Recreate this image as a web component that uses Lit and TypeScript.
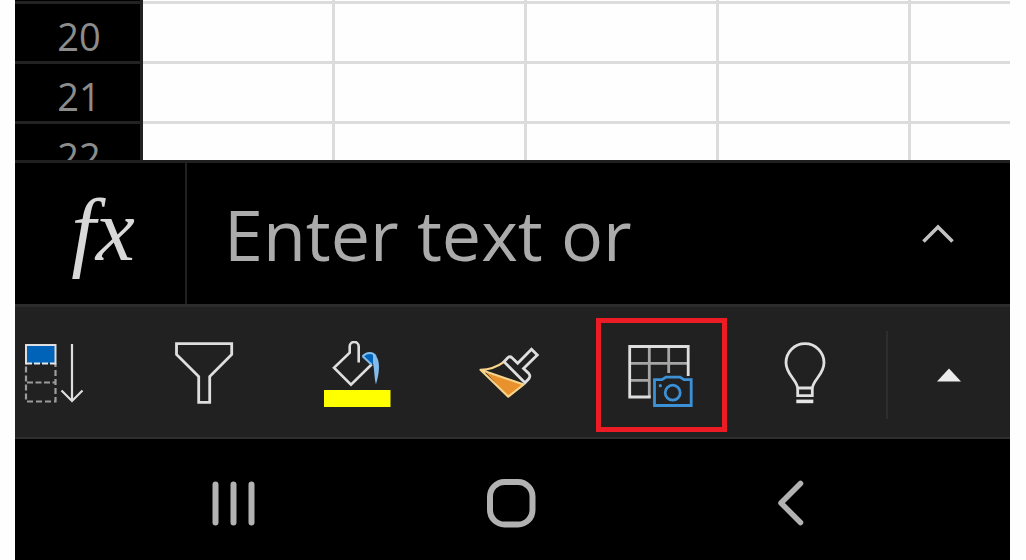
import { LitElement, html, css, svg } from "lit";
import { customElement, property } from "lit/decorators.js";

const icons = {
  fillDown: svg`
    <path d="M6 22.5V60.5H35.5V22.5" stroke="#9c9c9c" stroke-width="2.2" stroke-dasharray="6 3" stroke-dashoffset="-3"/>
    <path d="M7 41.5H35" stroke="#9c9c9c" stroke-width="2.2" stroke-dasharray="6 2.5"/>
    <path d="M6 4H35.5V22.5H6Z" fill="#0063b8"/>
    <path d="M6 23.5V4H35.5V23.5" stroke="#dedede" stroke-width="2"/>
    <path d="M6 22.5H35.5" stroke="#e6e6e6" stroke-width="2" stroke-dasharray="6 2"/>
    <path d="M52 3V59.5M41.5 49.5 52 60 62.5 49.5" stroke="#dedede" stroke-width="2.2"/>`,
  filter: svg`
    <path d="M4.5 2.7H59.7V13.5L37.7 35.5V61.4H26.7V35.5L4.5 13.5Z" stroke="#dedede" stroke-width="2.8"/>`,
  fillColor: svg`
    <path d="M39 16C42 11.5 48 10.5 51.5 14.5L49.5 22.5 46.5 23.5Z" fill="#0063b8"/>
    <path d="M38.5 15.5C42.5 11 49 10.7 51.8 15.5" stroke="#83bceb" stroke-width="2"/>
    <path d="M49 12C57 17 56 31 51.9 43.5 50.2 37 50.5 29 49 22Z" fill="#83bceb"/>
    <path d="M34.7 21.5V5.5a4.5 4.5 0 0 0-9 0V11.7L10 26.7 27 43.7 47.8 23.3" stroke="#dedede" stroke-width="2.6"/>
    <path d="M38.6 15.2 47.5 23.5" stroke="#83bceb" stroke-width="2"/>
    <path d="M0 49H66.5V66H0Z" fill="#ffff00"/>`,
  formatPainter: svg`
    <path d="M11 31.5 48.5 43.7 33.3 56Z" fill="#e8912d"/>
    <path d="M29 20.8C22 26 14 28.5 5.5 28.8L33.3 55.7 48.7 43.5 5.5 28.8" stroke="#f8d58c" stroke-width="2.2" stroke-linejoin="round"/>
    <path d="M29 20.8 33 16.5Q35 14.8 37 16.7L42.7 22.3 56.5 8.3 62.3 14 48.5 27.5 53.8 32.5Q55.8 35 54 37.5L50 41.7Z" stroke="#dedede" stroke-width="2.8"/>`,
  picture: svg`
    <path d="M22.3 5V56M41.7 5V32M3 22.3H61M3 39.3H23" stroke="#a6a6a6" stroke-width="2.8"/>
    <path d="M23.7 56H2.7V5.5H61.2V35" stroke="#dedede" stroke-width="2.8"/>
    <path d="M27.5 38.6H35L39 36.1H53L57 38.6H64.2V64.5H27.5Z" stroke="#3c91d6" stroke-width="2.8"/>
    <circle cx="45.7" cy="51.7" r="7.5" stroke="#3c91d6" stroke-width="2.8"/>
    <circle cx="33.3" cy="44.7" r="1.6" fill="#3c91d6"/>`,
  bulb: svg`
    <path d="M26.7 54.7V48C26.7 39 15 34 15 21.7a19 19 0 0 1 38 0C53 34 41.3 39 41.3 48V54.7ZM26.7 47H41.3" stroke="#e0e0e0" stroke-width="2.8"/>
    <path d="M25.3 60.4H42.3" stroke="#e6e6e6" stroke-width="3.6"/>`,
};

const tools = [
  { label: "Fill down", icon: icons.fillDown },
  { label: "Sort and filter", icon: icons.filter },
  { label: "Fill colour", icon: icons.fillColor },
  { label: "Format painter", icon: icons.formatPainter },
  { label: "Data from picture", icon: icons.picture, marked: true },
  { label: "Tell me", icon: icons.bulb },
];

const reset = css`
  :host, * { box-sizing: border-box; }
  button {
    display: flex;
    align-items: center;
    justify-content: center;
    margin: 0;
    padding: 0;
    border: 0;
    background: none;
    color: inherit;
    font: inherit;
  }
  svg { display: block; flex: none; fill: none; }
`;

@customElement("sheet-grid")
class SheetGrid extends LitElement {
  @property({ type: Array }) rows: number[] = [20, 21, 22];

  static styles = [reset, css`
    :host { display: block; height: 160px; overflow: hidden; background: #fefefe; }
    table { width: 100%; table-layout: fixed; border-collapse: separate; border-spacing: 0; }
    .head { width: 128px; }
    .column { width: 192px; }
    th, td { height: 60px; padding: 0; border-bottom: 3px solid #dcdcdc; }
    td { border-right: 3px solid #dcdcdc; }
    td:last-child { border-right: 0; }
    th {
      padding: 8px 0 0 3px;
      background: #000;
      color: #8c8c8c;
      border-right: 3px solid #222;
      border-bottom-color: #222;
      font: 400 38px/49px "Open Sans", "Noto Sans", sans-serif;
    }
    .sliver th, .sliver td { height: 4px; padding: 0; }
  `];

  render() {
    const cells = [0, 1, 2, 3, 4].map(() => html`<td></td>`);
    return html`
      <table aria-label="Worksheet">
        <colgroup>
          <col class="head"><col class="column"><col class="column"><col class="column"><col class="column"><col>
        </colgroup>
        <tbody>
          <tr class="sliver"><th></th>${cells}</tr>
          ${this.rows.map((n) => html`<tr><th scope="row">${n}</th>${cells}</tr>`)}
        </tbody>
      </table>`;
  }
}

@customElement("formula-bar")
class FormulaBar extends LitElement {
  static styles = [reset, css`
    :host { display: flex; height: 144px; border-top: 3px solid #202020; background: #000; }
    .fx {
      width: 172px;
      flex: none;
      padding: 0 0 6px 6px;
      border-right: 2px solid #202020;
      color: #d8d8d8;
      font: italic 400 88px/100px "Liberation Serif", serif;
    }
    input {
      flex: 1;
      min-width: 0;
      padding: 0 0 0 37px;
      border: 0;
      outline: 0;
      background: none;
      color: #ababab;
      font: 400 70px/100px "Open Sans", "Noto Sans", sans-serif;
    }
    input::placeholder { color: #ababab; opacity: 1; }
    .expand { width: 144px; flex: none; }
  `];

  render() {
    return html`
      <button class="fx" aria-label="Insert function">fx</button>
      <input type="text" aria-label="Formula" placeholder="Enter text or">
      <button class="expand" aria-label="Expand formula bar">
        <svg width="34" height="20" viewBox="0 0 34 20">
          <path d="M2.5 17.5 17 3 31.5 17.5" stroke="#c2c2c2" stroke-width="3.6"/>
        </svg>
      </button>`;
  }
}

@customElement("tool-strip")
class ToolStrip extends LitElement {
  static styles = [reset, css`
    :host {
      display: flex;
      align-items: center;
      padding: 11px 0 5px;
      border-top: 3px solid #2c2c2c;
      border-bottom: 2px solid #2e2e2e;
      background: #212121;
    }
    .tools {
      flex: 1;
      display: grid;
      grid-template-columns: 115fr repeat(4, 152fr) 135fr;
      padding-right: 14px;
    }
    .tool { height: 114px; }
    .tool:first-child { justify-content: flex-start; padding-left: 5px; }
    .mark {
      display: flex;
      align-items: center;
      justify-content: center;
      width: 131px;
      height: 114px;
      border: 5px solid #ed1c24;
    }
    .divider { width: 2px; height: 88px; background: #2e2e2e; }
    .more { width: 122px; height: 114px; }
  `];

  render() {
    return html`
      <div class="tools">
        ${tools.map((t) => {
          const icon = html`<svg width="68" height="68" viewBox="0 0 68 68">${t.icon}</svg>`;
          return html`<button class="tool" aria-label=${t.label}>
            ${t.marked ? html`<span class="mark">${icon}</span>` : icon}
          </button>`;
        })}
      </div>
      <div class="divider"></div>
      <button class="more" aria-label="Show more commands">
        <svg width="26" height="14" viewBox="0 0 26 14"><path d="M1 13.5 13 .5 25 13.5Z" fill="#ebebeb"/></svg>
      </button>`;
  }
}

@customElement("system-nav")
class SystemNav extends LitElement {
  static styles = [reset, css`
    :host {
      display: grid;
      grid-template-columns: repeat(3, 1fr);
      align-items: center;
      min-height: 121px;
      padding: 8px 80px 0;
      background: #000;
    }
    button { height: 80px; }
  `];

  render() {
    return html`
      <button aria-label="Recent apps">
        <svg width="50" height="50" viewBox="0 0 50 50">
          <path d="M6.5 5.5V43.5M24.5 5.5V43.5M42.5 5.5V43.5" stroke="#b2b2b2" stroke-width="6" stroke-linecap="round"/>
        </svg>
      </button>
      <button aria-label="Home">
        <svg width="50" height="50" viewBox="0 0 50 50">
          <rect x="3" y="3" width="42.5" height="42.5" rx="14.5" stroke="#b2b2b2" stroke-width="6"/>
        </svg>
      </button>
      <button aria-label="Back">
        <svg width="50" height="50" viewBox="0 0 50 50">
          <path d="M34.5 4.5 15 24 34.5 43.5" stroke="#b2b2b2" stroke-width="5.5" stroke-linecap="round" stroke-linejoin="round"/>
        </svg>
      </button>`;
  }
}

@customElement("app-root")
class AppRoot extends LitElement {
  static styles = css`
    :host { display: block; min-height: 100vh; background: #fefefe; }
    .screen {
      display: flex;
      flex-direction: column;
      min-height: 100vh;
      margin: 0 16px 0 15px;
    }
    .screen > system-nav { flex: 1; }
  `;

  render() {
    return html`
      <main class="screen">
        <sheet-grid></sheet-grid>
        <formula-bar></formula-bar>
        <tool-strip></tool-strip>
        <system-nav></system-nav>
      </main>`;
  }
}
